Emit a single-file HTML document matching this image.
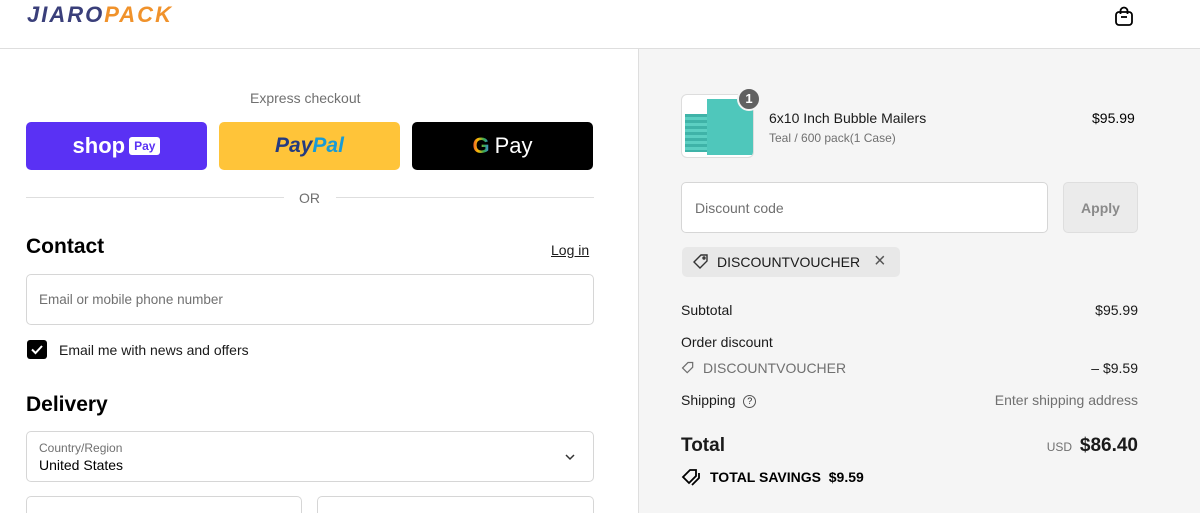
<!DOCTYPE html>
<html style="overflow:hidden;height:513px"><head><meta charset="utf-8"><style>
*{box-sizing:border-box;margin:0;padding:0}
body{width:1200px;height:513px;overflow:hidden;font-family:"Liberation Sans",sans-serif;color:#000;background:#fff;position:relative;font-size:14px}
.a{position:absolute}
.hdr{left:0;top:0;width:1200px;height:49px;border-bottom:1px solid #dedede;background:#fff}
.right{left:638px;top:49px;width:562px;height:464px;background:#f5f5f5;border-left:1px solid #dedede}
.btn{top:122px;width:181px;height:48px;border-radius:5px;display:flex;align-items:center;justify-content:center}
.inp{border:1px solid #d6d6d6;border-radius:5px;background:#fff}
.ph{color:#707070;font-size:14px}
.row{left:681px;width:457px;display:flex;justify-content:space-between;font-size:14px;color:#1a1a1a}
</style></head><body>
<div class="a hdr"></div>
<div class="a" style="left:27px;top:2px;font-size:22px;font-weight:bold;font-style:italic;letter-spacing:2px"><span style="color:#3a3f7a">JIARO</span><span style="color:#f0922b">PACK</span></div>
<svg class="a" style="left:1113px;top:5px" width="22" height="22" viewBox="0 0 22 22" fill="none" stroke="#000" stroke-width="1.8"><rect x="3" y="7" width="16" height="13" rx="3"/><path d="M7.5 9V6a3.5 3.5 0 0 1 7 0v3"/><path d="M8 12h6"/></svg>

<div class="a right"></div>

<div class="a" style="left:250px;top:90px;font-size:14px;color:#707070">Express checkout</div>
<div class="a btn" style="left:26px;background:#5a31f4;color:#fff"><span style="font-size:22px;font-weight:bold">shop</span><span style="margin-left:4px;background:#fff;color:#5a31f4;font-size:12px;font-weight:bold;padding:2px 5px;border-radius:3px">Pay</span></div>
<div class="a btn" style="left:219px;background:#ffc439"><span style="font-size:21px;font-weight:bold;font-style:italic;color:#253b80">Pay</span><span style="font-size:21px;font-weight:bold;font-style:italic;color:#179bd7">Pal</span></div>
<div class="a btn" style="left:412px;background:#000;color:#fff"><span style="font-size:22px;font-weight:bold;background:linear-gradient(90deg,#ea4335,#fbbc05,#34a853,#4285f4);-webkit-background-clip:text;color:transparent">G</span><span style="font-size:22px;margin-left:5px">Pay</span></div>
<div class="a" style="left:26px;top:197px;width:258px;border-top:1px solid #dedede"></div>
<div class="a" style="left:336px;top:197px;width:258px;border-top:1px solid #dedede"></div>
<div class="a" style="left:299px;top:190px;color:#707070">OR</div>

<div class="a" style="left:26px;top:235px;font-size:21px;font-weight:bold">Contact</div>
<div class="a" style="left:551px;top:242px;font-size:14px;text-decoration:underline;color:#1a1a1a">Log in</div>
<div class="a inp" style="left:26px;top:274px;width:568px;height:51px"></div>
<div class="a ph" style="left:39px;top:292px;font-size:13.5px">Email or mobile phone number</div>
<div class="a" style="left:27px;top:340px;width:20px;height:19px;background:#000;border-radius:3px"></div>
<svg class="a" style="left:30px;top:343px" width="14" height="13" viewBox="0 0 14 13"><path d="M2 6.5l3.5 3.5L12 3" stroke="#fff" stroke-width="2" fill="none"/></svg>
<div class="a" style="left:59px;top:342px;font-size:14px;color:#1a1a1a">Email me with news and offers</div>

<div class="a" style="left:26px;top:393px;font-size:21px;font-weight:bold">Delivery</div>
<div class="a inp" style="left:26px;top:431px;width:568px;height:51px"></div>
<div class="a" style="left:39px;top:441px;font-size:12px;color:#707070">Country/Region</div>
<div class="a" style="left:39px;top:457px;font-size:14px">United States</div>
<svg class="a" style="left:563px;top:451px" width="14" height="12" viewBox="0 0 14 12"><path d="M3 4l4 4 4-4" stroke="#333" stroke-width="1.5" fill="none"/></svg>
<div class="a inp" style="left:26px;top:496px;width:276px;height:17px;border-bottom:none;border-radius:5px 5px 0 0"></div>
<div class="a inp" style="left:317px;top:496px;width:277px;height:17px;border-bottom:none;border-radius:5px 5px 0 0"></div>

<div class="a" style="left:681px;top:94px;width:73px;height:64px;border:1px solid #ddd;border-radius:6px;background:#fff;overflow:hidden">
<div class="a" style="left:3px;top:19px;width:22px;height:38px;background:repeating-linear-gradient(#3fb3a8 0 3px,#5ccfc2 3px 6px)"></div>
<div class="a" style="left:25px;top:4px;width:46px;height:56px;background:#4fc7bb"></div></div>
<div class="a" style="left:737px;top:87px;width:24px;height:24px;border-radius:12px;background:#616161;color:#fff;font-size:13px;font-weight:bold;text-align:center;line-height:20px;border:2px solid #f5f5f5">1</div>
<div class="a" style="left:769px;top:110px;font-size:14px;color:#1a1a1a">6x10 Inch Bubble Mailers</div>
<div class="a" style="left:769px;top:131px;font-size:12px;color:#707070">Teal / 600 pack(1 Case)</div>
<div class="a" style="left:1092px;top:110px;font-size:14px">$95.99</div>

<div class="a inp" style="left:681px;top:182px;width:367px;height:51px"></div>
<div class="a ph" style="left:695px;top:200px">Discount code</div>
<div class="a" style="left:1063px;top:182px;width:75px;height:51px;border:1px solid #dedede;border-radius:5px;background:#ebebeb;color:#8a8a8a;font-weight:bold;text-align:center;line-height:51px;font-size:14px">Apply</div>
<div class="a" style="left:682px;top:247px;width:218px;height:30px;background:#e8e8e8;border-radius:5px"></div>
<svg class="a" style="left:691px;top:253px" width="20" height="18" viewBox="0 0 20 18" fill="none" stroke="#333" stroke-width="1.4"><path d="M3 9l7-7h6v6l-7 7z"/><circle cx="13" cy="5" r="1"/></svg>
<div class="a" style="left:717px;top:254px;font-size:14px;color:#1a1a1a">DISCOUNTVOUCHER</div>
<div class="a" style="left:874px;top:250px;font-size:20px;color:#555">×</div>

<div class="a row" style="top:302px"><span>Subtotal</span><span>$95.99</span></div>
<div class="a row" style="top:334px"><span>Order discount</span></div>
<svg class="a" style="left:680px;top:361px" width="16" height="14" viewBox="0 0 20 18" fill="none" stroke="#707070" stroke-width="1.6"><path d="M3 9l7-7h6v6l-7 7z"/></svg>
<div class="a row" style="top:360px;color:#707070"><span style="margin-left:22px">DISCOUNTVOUCHER</span><span style="color:#1a1a1a">– $9.59</span></div>
<div class="a row" style="top:392px"><span>Shipping&nbsp;&nbsp;<span style="display:inline-block;width:13px;height:13px;border:1.3px solid #555;border-radius:50%;font-size:9px;text-align:center;line-height:11px;vertical-align:middle">?</span></span><span style="color:#707070">Enter shipping address</span></div>
<div class="a row" style="top:435px;align-items:baseline"><span style="font-size:19px;font-weight:bold">Total</span><span><span style="font-size:12px;color:#707070">USD</span>&nbsp; <span style="font-size:19px;font-weight:bold">$86.40</span></span></div>
<svg class="a" style="left:681px;top:468px" width="20" height="18" viewBox="0 0 20 18" fill="none" stroke="#000" stroke-width="1.8"><path d="M2 9l7-7h6v6l-7 7z"/><path d="M18 5v5l-7 7"/></svg>
<div class="a" style="left:710px;top:469px;font-size:14px;font-weight:bold">TOTAL SAVINGS&nbsp;&nbsp;$9.59</div>
</body></html>
